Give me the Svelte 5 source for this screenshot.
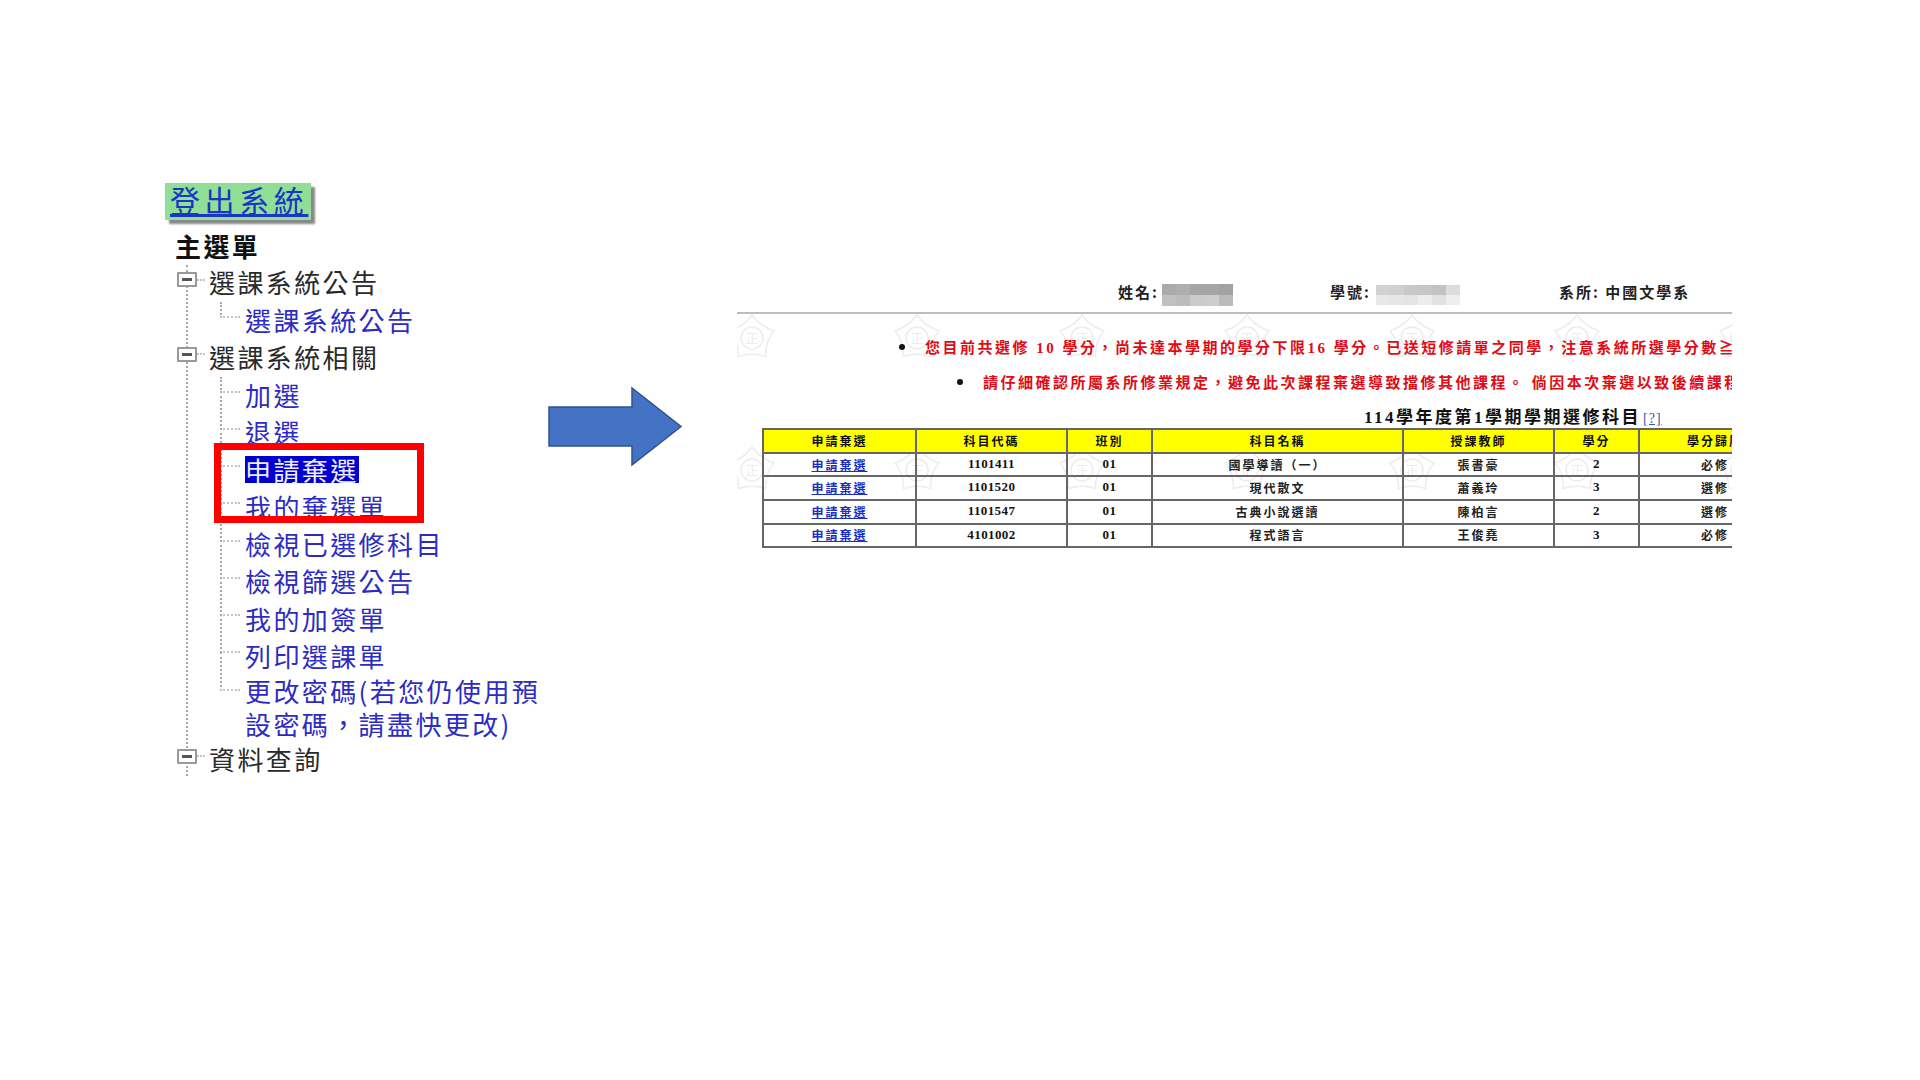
<script>
  const groupOne = ['選課系統公告']
  const groupTwo = ['加選', '退選', '申請棄選', '我的棄選單', '檢視已選修科目', '檢視篩選公告', '我的加簽單', '列印選課單']

  const nameBlur = [
    ['#aaaaaa', '#b0afae', '#a6a6a6', '#a5a5a5', '#a2a2a2'],
    ['#c0c0c0', '#bcbcbc', '#cbcbcb', '#cdcdcd', '#bbbbbb']
  ]
  const idBlur = [
    ['#d2d2d2', '#d0d0d0', '#c8c8c8', '#c6c6c6', '#c2c2c2', '#dcdcdc'],
    ['#e8e8e8', '#e6e6e6', '#e4e4e4', '#ececec', '#e2e2e2', '#eeeeee']
  ]

  const heads = ['申請棄選', '科目代碼', '班別', '科目名稱', '授課教師', '學分', '學分歸屬']
  const widths = [153, 151, 85, 251, 151, 85, 152]
  const courses = [
    { code: '1101411', cls: '01', name: '國學導讀（一）', teacher: '張書豪', credit: 2, kind: '必修' },
    { code: '1101520', cls: '01', name: '現代散文', teacher: '蕭義玲', credit: 3, kind: '選修' },
    { code: '1101547', cls: '01', name: '古典小說選讀', teacher: '陳柏言', credit: 2, kind: '選修' },
    { code: '4101002', cls: '01', name: '程式語言', teacher: '王俊堯', credit: 3, kind: '必修' }
  ]
</script>

<div class="slide">
  <nav class="menu">
    <a class="logout" href="#logout">登出系統</a>
    <div class="menu-title">主選單</div>

    <div class="tree">
      <div class="parent"><span class="box"></span><span class="dots"></span>選課系統公告</div>
      {#each groupOne as item}
        <div class="child"><a href="#item">{item}</a></div>
      {/each}

      <div class="parent"><span class="box"></span><span class="dots"></span>選課系統相關</div>
      {#each groupTwo as item}
        <div class="child">
          <a href="#item" class:selected={item === '申請棄選'}>{item}</a>
        </div>
      {/each}
      <div class="child wrapped"><a href="#item">更改密碼(若您仍使用預<br />設密碼，請盡快更改)</a></div>

      <div class="parent"><span class="box"></span><span class="dots"></span>資料查詢</div>

      <div class="redbox"></div>
    </div>
  </nav>

  <svg class="arrow" width="136" height="82" viewBox="0 0 136 82">
    <path d="M1 21H84V2L133 40.5L84 79V60H1Z" fill="#4472c4" stroke="#2f528f" stroke-width="1.5" />
  </svg>

  <main class="panel">
    <div class="info">
      <span class="label name-label">姓名:</span>
      <div class="blur name-blur">
        {#each nameBlur as row}
          <div class="blur-row">
            {#each row as c}<span style="background: {c}"></span>{/each}
          </div>
        {/each}
      </div>
      <span class="label id-label">學號:</span>
      <div class="blur id-blur">
        {#each idBlur as row}
          <div class="blur-row">
            {#each row as c}<span style="background: {c}"></span>{/each}
          </div>
        {/each}
      </div>
      <span class="label dept-label">系所: 中國文學系</span>
    </div>

    <div class="sheet">
      <svg class="watermark" width="100%" height="100%">
        <defs>
          <pattern id="emblem" x="-30" y="0" width="165" height="132" patternUnits="userSpaceOnUse">
            <g transform="translate(45 24)" fill="none" stroke="#ececec" stroke-width="1.5">
              <path d="M0 -23Q8 -12 21.9 -7.1Q13 4 13.5 18.6Q0 14 -13.5 18.6Q-13 4 -21.9 -7.1Q-8 -12 0 -23Z" />
              <circle r="11" />
              <text y="5" text-anchor="middle" font-size="13" fill="#ececec" stroke="none">正</text>
            </g>
          </pattern>
        </defs>
        <rect width="100%" height="100%" fill="url(#emblem)" />
      </svg>

      <ul class="notice first">
        <li>您目前共選修 10 學分，尚未達本學期的學分下限16 學分。已送短修請單之同學，注意系統所選學分數≧學分下限</li>
      </ul>
      <ul class="notice second">
        <li>請仔細確認所屬系所修業規定，避免此次課程棄選導致擋修其他課程。 倘因本次棄選以致後續課程無法修習</li>
      </ul>

      <div class="title">114學年度第1學期學期選修科目<a href="#help">[?]</a></div>

      <table>
        <colgroup>
          {#each widths as w}<col style="width: {w}px" />{/each}
        </colgroup>
        <thead>
          <tr>
            {#each heads as h}<th>{h}</th>{/each}
          </tr>
        </thead>
        <tbody>
          {#each courses as c}
            <tr>
              <td><a href="#drop">申請棄選</a></td>
              <td class="num">{c.code}</td>
              <td class="num">{c.cls}</td>
              <td>{c.name}</td>
              <td>{c.teacher}</td>
              <td class="num">{c.credit}</td>
              <td>{c.kind}</td>
            </tr>
          {/each}
        </tbody>
      </table>
    </div>
  </main>
</div>

<style>
  :global(body) {
    margin: 0;
    background: #fff;
    font-family: "Liberation Serif", "Noto Sans CJK TC", serif;
  }

  .slide {
    display: flex;
    align-items: flex-start;
    width: 1920px;
    height: 1080px;
    overflow: hidden;
    background: #fff;
  }

  /* left menu */
  .menu {
    width: 383px;
    margin: 183px 0 0 165px;
    flex: none;
    font-family: "Noto Sans CJK TC", sans-serif;
  }

  .logout {
    display: block;
    width: 146px;
    height: 37px;
    box-sizing: border-box;
    padding-left: 5px;
    background: #8fdf96;
    box-shadow: 4px 4px 2px #888;
    color: #1b35c4;
    font-size: 30px;
    line-height: 33px;
    letter-spacing: 4.6px;
    white-space: nowrap;
  }

  .menu-title {
    margin: 8px 0 0 10px;
    color: #111;
    font-size: 26px;
    font-weight: 700;
    line-height: 36px;
    letter-spacing: 2.4px;
  }

  .tree {
    position: relative;
    width: 383px;
    font-size: 26px;
    letter-spacing: 2.4px;
    line-height: 33px;
  }

  .tree::before {
    content: "";
    position: absolute;
    left: 21px;
    top: 1px;
    bottom: 2px;
    border-left: 2px dotted #a8a8a8;
  }

  .parent {
    position: relative;
    display: flex;
    align-items: center;
    height: 35.3px;
    padding-bottom: 2px;
    color: #2a2a2a;
    padding-left: 12px;
  }

  .box {
    position: relative;
    flex: none;
    width: 20px;
    height: 15px;
    box-sizing: border-box;
    margin-top: -4px;
    border: 2px solid #999;
    border-radius: 1px;
    background: #fff;
  }

  .box::after {
    content: "";
    position: absolute;
    left: 3px;
    right: 3px;
    top: 4px;
    height: 3px;
    background: #555;
  }

  .dots {
    flex: none;
    width: 8px;
    margin: -4px 4px 0 0;
    border-top: 2px dotted #c4c4c4;
  }

  .child {
    position: relative;
    padding: 2.15px 0 2.15px 80px;
    min-height: 33px;
  }

  .child::before {
    content: "";
    position: absolute;
    left: 55px;
    top: -22.5px;
    width: 18px;
    height: 37px;
    border-left: 2px dotted #a8a8a8;
    border-bottom: 2px dotted #c4c4c4;
  }

  .parent + .child::before {
    top: 1px;
    height: 14px;
  }

  .child.wrapped {
    padding-top: 0;
    padding-bottom: 0.6px;
  }

  .child a {
    color: #2c2cc4;
    text-decoration: none;
    white-space: nowrap;
  }

  .child a.selected {
    display: inline-block;
    height: 27px;
    background: #0000d0;
    color: #eef;
    line-height: 27px;
    vertical-align: top;
    margin-top: 3px;
  }

  .redbox {
    position: absolute;
    left: 49px;
    top: 179px;
    width: 210px;
    height: 80px;
    box-sizing: border-box;
    border: 7px solid #f00;
  }

  .arrow {
    flex: none;
    margin-top: 386px;
  }

  /* right panel */
  .panel {
    flex: none;
    width: 995px;
    margin: 278px 0 0 53px;
    overflow: hidden;
  }

  .info {
    display: flex;
    align-items: center;
    height: 34px;
    padding-left: 381px;
    border-bottom: 2px solid #bdbdbd;
    font-family: "Noto Sans CJK TC", sans-serif;
    font-size: 15px;
    font-weight: 700;
    letter-spacing: 2px;
    color: #222;
  }

  .label {
    margin-top: -7px;
    white-space: nowrap;
  }

  .name-label {
    width: 44px;
  }

  .id-label {
    width: 46px;
    margin-left: 97px;
  }

  .dept-label {
    margin-left: 99px;
  }

  .blur {
    display: flex;
    flex-direction: column;
  }

  .blur-row {
    display: flex;
    flex: 1;
  }

  .blur-row span {
    flex: 1;
  }

  .name-blur {
    width: 71px;
    height: 22px;
  }

  .id-blur {
    width: 84px;
    height: 20px;
  }

  .sheet {
    position: relative;
    height: 240px;
  }

  .watermark {
    position: absolute;
    left: 0;
    top: 0;
  }

  .notice {
    position: relative;
    margin: 0;
    height: 35px;
    line-height: 35px;
    color: #e00b14;
    font-family: "Liberation Serif", "Noto Sans CJK TC", sans-serif;
    font-size: 15px;
    font-weight: 700;
    letter-spacing: 2.5px;
    white-space: nowrap;
  }

  .notice li {
    padding-left: 7px;
  }

  .notice li::marker {
    color: #111;
    font-size: 20px;
  }

  .notice.first {
    padding: 15px 0 0 181px;
  }

  .notice.second {
    margin-top: -0.3px;
    padding-left: 239px;
  }

  .title {
    position: relative;
    height: 23px;
    margin-top: 6.5px;
    padding-left: 627px;
    color: #111;
    font-family: "Liberation Serif", "Noto Sans CJK TC", sans-serif;
    font-size: 17px;
    font-weight: 700;
    line-height: 26px;
    letter-spacing: 2.5px;
    white-space: nowrap;
  }

  .title a {
    margin-left: 2px;
    color: #3a55b8;
    font-size: 14px;
    font-weight: 400;
    letter-spacing: 1px;
  }

  table {
    position: relative;
    width: 1028px;
    margin-left: 25px;
    border-collapse: collapse;
    table-layout: fixed;
    border: 2px solid #555;
    font-family: "Liberation Serif", "Noto Sans CJK TC", sans-serif;
    font-size: 12px;
    letter-spacing: 2px;
    color: #222;
  }

  th, td {
    height: 21.6px;
    padding: 0;
    border: 2px solid #666;
    text-align: center;
    font-weight: 700;
  }

  th {
    background: #ff0;
    color: #111;
  }

  td a {
    color: #1c2fc4;
  }

  td.num {
    font-size: 13px;
    letter-spacing: 0.4px;
    color: #111;
    vertical-align: top;
    line-height: 20px;
  }
</style>
